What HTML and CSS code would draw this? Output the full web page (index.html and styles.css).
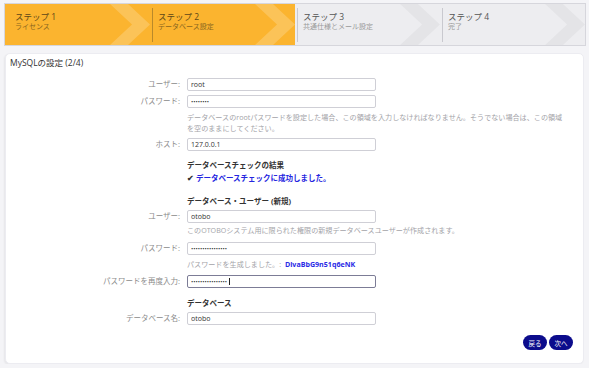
FILE: index.html
```html
<!DOCTYPE html>
<html lang="ja">

<head>
  <meta charset="UTF-8">
  <meta name="viewport" content="width=device-width, initial-scale=1.0">
  <title>OTOBO インストーラー</title>

  <link rel="stylesheet" href="styles.css">
</head>

<body>
  <ol class="steps">
    <li class="steps__item steps__item--done">
      <div class="steps__text">
        <div class="steps__title">ステップ 1</div>
        <div class="steps__sub">ライセンス</div>
      </div>
    </li>
    <li class="steps__item steps__item--done">
      <div class="steps__text steps__text--sep">
        <div class="steps__title">ステップ 2</div>
        <div class="steps__sub">データベース設定</div>
      </div>
    </li>
    <li class="steps__item">
      <div class="steps__text steps__text--sep">
        <div class="steps__title">ステップ 3</div>
        <div class="steps__sub">共通仕様とメール設定</div>
      </div>
    </li>
    <li class="steps__item">
      <div class="steps__text steps__text--sep">
        <div class="steps__title">ステップ 4</div>
        <div class="steps__sub">完了</div>
      </div>
    </li>
  </ol>

  <div class="card">
    <h2 class="card__title">MySQLの設定 (2/4)</h2>

    <form class="form">
      <div class="form__row form__row--first">
        <label for="dbUser">ユーザー:</label>
        <input id="dbUser" class="form__input" type="text" value="root">
      </div>
      <div class="form__row">
        <label for="dbPw">パスワード:</label>
        <input id="dbPw" class="form__input" type="password" value="12345678">
      </div>
      <div class="form__row form__row--help">
        <span></span>
        <p class="form__help">データベースのrootパスワードを設定した場合、この領域を入力しなければなりません。そうでない場合は、この領域を空のままにしてください。</p>
      </div>
      <div class="form__row form__row--after-help">
        <label for="dbHost">ホスト:</label>
        <input id="dbHost" class="form__input" type="text" value="127.0.0.1">
      </div>

      <div class="form__row form__row--section">
        <span></span>
        <h3 class="form__heading">データベースチェックの結果</h3>
      </div>
      <div class="form__row form__row--result">
        <span></span>
        <p class="form__success"><span class="form__check">&#10004;</span>データベースチェックに成功しました。</p>
      </div>

      <div class="form__row form__row--section2">
        <span></span>
        <h3 class="form__heading">データベース・ユーザー (新規)</h3>
      </div>
      <div class="form__row form__row--under-heading">
        <label for="newUser">ユーザー:</label>
        <input id="newUser" class="form__input" type="text" value="otobo">
      </div>
      <div class="form__row form__row--help2">
        <span></span>
        <p class="form__help">このOTOBOシステム用に限られた権限の新規データベースユーザーが作成されます。</p>
      </div>
      <div class="form__row form__row--after-help2">
        <label for="newPw">パスワード:</label>
        <input id="newPw" class="form__input" type="password" value="DlvaBbG9n51q6eNK">
      </div>
      <div class="form__row form__row--help">
        <span></span>
        <p class="form__help">パスワードを生成しました。: <strong class="form__generated">DlvaBbG9n51q6eNK</strong></p>
      </div>
      <div class="form__row form__row--after-help3">
        <label for="newPw2">パスワードを再度入力:</label>
        <div class="form__focus">
          <input id="newPw2" class="form__input form__input--focus" type="password" value="DlvaBbG9n51q6eNK">
          <span class="form__caret"></span>
        </div>
      </div>

      <div class="form__row form__row--section3">
        <span></span>
        <h3 class="form__heading">データベース</h3>
      </div>
      <div class="form__row form__row--under-heading">
        <label for="dbName">データベース名:</label>
        <input id="dbName" class="form__input" type="text" value="otobo">
      </div>

      <div class="form__actions">
        <button type="button" class="btn">戻る</button>
        <button type="button" class="btn">次へ</button>
      </div>
    </form>
  </div>
</body>

</html>
```

FILE: styles.css
```css
* {
  box-sizing: border-box;
}

body {
  margin: 0;
  padding: 3px 3px 0 4px;
  background: #f4f4f7;
  font-family: "Open Sans", "Noto Sans CJK JP", sans-serif;
  color: #333;
}

/* step bar */
.steps {
  display: flex;
  list-style: none;
  margin: 0;
  padding: 0;
  height: 43px;
  border: 1px solid #d6d6dc;
  background: #ededf0;
}

.steps__item {
  position: relative;
  flex: 1;
  overflow: hidden;
}

.steps__item--done {
  background: #fbb42f;
}

.steps__item::after {
  content: "";
  position: absolute;
  top: 0;
  right: 0;
  bottom: 0;
  width: 40px;
  background: rgba(0, 0, 0, .035);
  clip-path: polygon(0 0, 45% 0, 100% 50%, 45% 100%, 0 100%, 55% 50%);
}

.steps__item--done::after {
  background: rgba(255, 255, 255, .2);
}

.steps__text {
  position: relative;
  z-index: 1;
  height: 34px;
  margin-top: 4px;
  padding: 3px 0 0 10px;
}

.steps__text--sep {
  margin-left: 2px;
  padding-left: 5px;
  border-left: 1px solid #c9c9cf;
}

.steps__item--done .steps__text--sep {
  border-left-color: #b9892a;
}

.steps__title {
  font-size: 8.5px;
  line-height: 11px;
  color: #555;
}

.steps__sub {
  font-size: 7px;
  line-height: 10px;
  color: #9a9a9a;
}

.steps__item--done .steps__title {
  color: #5e4718;
}

.steps__item--done .steps__sub {
  color: #8a6620;
}

/* card */
.card {
  margin: 7px 2px 0 1px;
  height: 311px;
  padding: 3px 10px 0 0;
  background: #fff;
  border: 1px solid #ececf1;
  border-radius: 5px;
  box-shadow: -1px 1px 2px rgba(0, 0, 0, .06);
}

.card__title {
  margin: 0 0 0 4px;
  font-size: 8.5px;
  line-height: 12px;
  font-weight: 400;
  color: #333;
}

.form__row {
  display: grid;
  grid-template-columns: 174px 1fr;
  column-gap: 7px;
  align-items: center;
  margin-top: 4px;
}

.form__row label {
  text-align: right;
  font-size: 7.5px;
  line-height: 13px;
  color: #8a8a8a;
}

.form__row--first {
  margin-top: 9px;
}

.form__row--help {
  margin-top: 4px;
}

.form__row--after-help {
  margin-top: 4px;
}

.form__row--section {
  margin-top: 9px;
}

.form__row--result {
  margin-top: 2px;
}

.form__row--section2 {
  margin-top: 12px;
}

.form__row--under-heading {
  margin-top: 3px;
}

.form__row--help2 {
  margin-top: 2px;
}

.form__row--after-help2 {
  margin-top: 6px;
}

.form__row--after-help3 {
  margin-top: 5px;
}

.form__row--section3 {
  margin-top: 10px;
}

.form__input {
  display: block;
  width: 189px;
  height: 13px;
  margin: 0;
  padding: 0 3px;
  border: 1px solid #cfcfd6;
  border-radius: 2px;
  font-family: "Open Sans", "Noto Sans CJK JP", sans-serif;
  font-size: 6px;
  color: #333;
  outline: none;
}

.form__row input[type="text"] {
  font-size: 7px;
}

.form__focus {
  position: relative;
  width: 189px;
}

.form__input--focus {
  border-color: #7c7c96;
}

/* caret of the focused field */
.form__caret {
  position: absolute;
  top: 3px;
  left: 42px;
  width: 1px;
  height: 7px;
  background: #222;
}

.form__help {
  margin: 0;
  padding-right: 4px;
  font-size: 7.1px;
  line-height: 11px;
  color: #a3a3a8;
}

.form__generated {
  margin-left: 2px;
  color: #2a2ae6;
  font-weight: 700;
}

.form__heading {
  margin: 0;
  font-size: 7.5px;
  line-height: 11px;
  font-weight: 700;
  color: #333;
}

.form__success {
  margin: 0;
  font-size: 7.5px;
  line-height: 11px;
  font-weight: 700;
  color: #2424e0;
}

.form__check {
  margin-right: 2px;
  color: #333;
}

.form__actions {
  display: flex;
  justify-content: flex-end;
  gap: 2px;
  margin-top: 10px;
}

.btn {
  width: 24px;
  height: 15px;
  padding: 0;
  border: 0;
  border-radius: 8px;
  background: #0c0c8c;
  color: #fff;
  font-family: "Open Sans", "Noto Sans CJK JP", sans-serif;
  font-size: 6.5px;
}
```
